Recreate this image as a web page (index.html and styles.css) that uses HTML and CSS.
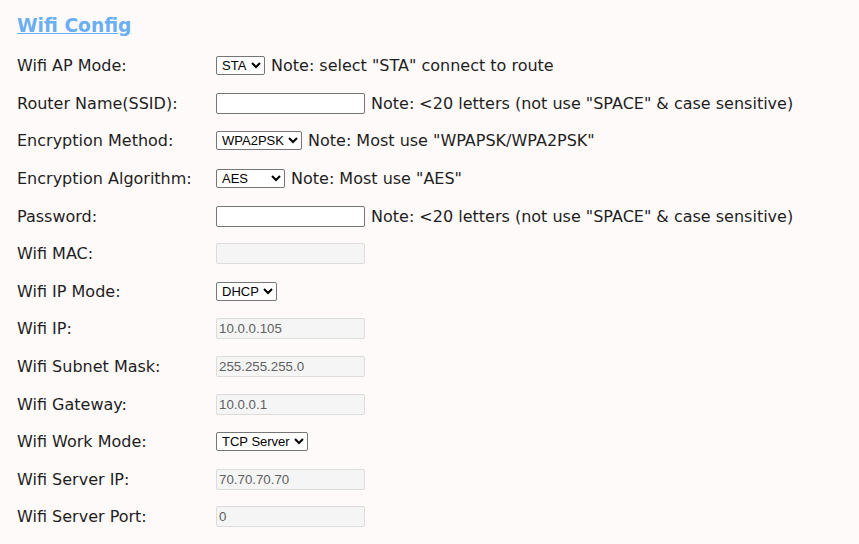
FILE: index.html
```html
<!DOCTYPE html>
<html lang="en">
<head>
  <meta charset="utf-8">
  <title>Wifi Config</title>
  <link rel="stylesheet" href="styles.css">
</head>
<body>
  <h2 class="title"><a href="#">Wifi Config</a></h2>
  <div class="form">
    <div class="row">
      <span class="label">Wifi AP Mode:</span>
      <span class="field">
        <select class="select"><option>STA</option><option>AP</option></select>
        Note: select "STA" connect to route
      </span>
    </div>
    <div class="row">
      <span class="label">Router Name(SSID):</span>
      <span class="field">
        <input class="text" type="text" value="">
        Note: &lt;20 letters (not use "SPACE" &amp; case sensitive)
      </span>
    </div>
    <div class="row">
      <span class="label">Encryption Method:</span>
      <span class="field">
        <select class="select"><option>WPA2PSK</option><option>WPAPSK</option></select>
        Note: Most use "WPAPSK/WPA2PSK"
      </span>
    </div>
    <div class="row">
      <span class="label">Encryption Algorithm:</span>
      <span class="field">
        <select class="select select-wide"><option>AES</option><option>TKIP</option></select>
        Note: Most use "AES"
      </span>
    </div>
    <div class="row">
      <span class="label">Password:</span>
      <span class="field">
        <input class="text" type="text" value="">
        Note: &lt;20 letters (not use "SPACE" &amp; case sensitive)
      </span>
    </div>
    <div class="row">
      <span class="label">Wifi MAC:</span>
      <span class="field"><input class="text" type="text" value="" disabled></span>
    </div>
    <div class="row">
      <span class="label">Wifi IP Mode:</span>
      <span class="field">
        <select class="select"><option>DHCP</option><option>Static</option></select>
      </span>
    </div>
    <div class="row">
      <span class="label">Wifi IP:</span>
      <span class="field"><input class="text" type="text" value="10.0.0.105" disabled></span>
    </div>
    <div class="row">
      <span class="label">Wifi Subnet Mask:</span>
      <span class="field"><input class="text" type="text" value="255.255.255.0" disabled></span>
    </div>
    <div class="row">
      <span class="label">Wifi Gateway:</span>
      <span class="field"><input class="text" type="text" value="10.0.0.1" disabled></span>
    </div>
    <div class="row">
      <span class="label">Wifi Work Mode:</span>
      <span class="field">
        <select class="select"><option>TCP Server</option><option>TCP Client</option></select>
      </span>
    </div>
    <div class="row">
      <span class="label">Wifi Server IP:</span>
      <span class="field"><input class="text" type="text" value="70.70.70.70" disabled></span>
    </div>
    <div class="row">
      <span class="label">Wifi Server Port:</span>
      <span class="field"><input class="text" type="text" value="0" disabled></span>
    </div>
  </div>
</body>
</html>
```

FILE: styles.css
```css
* {
  box-sizing: border-box;
}

body {
  margin: 0;
  padding: 11px 17px;
  background-color: #FFFAFA;
  color: #1E1E1E;
  font-family: "DejaVu Sans", Verdana, sans-serif;
  font-size: 16px;
}

.title {
  margin: 2px 0 8px;
  font-size: 18.7px;
  line-height: 26px;
}

.title a {
  color: #6AAFF2;
  text-decoration: underline;
}

.row {
  display: flex;
  align-items: center;
  height: 37.6px;
}

.label {
  width: 199px;
  flex-shrink: 0;
}

.field {
  display: flex;
  align-items: center;
  gap: 6px;
  white-space: nowrap;
}

.select {
  height: 19px;
  padding: 0 1px;
  border: 1px solid #767676;
  border-radius: 2px;
  background-color: #FFFFFF;
  color: #000000;
  font-family: "Liberation Sans", Arial, sans-serif;
  font-size: 13px;
}

.select-wide {
  width: 69px;
}

.text {
  width: 149px;
  height: 21px;
  padding: 1px 2px;
  border: 1px solid #767676;
  border-radius: 2px;
  background-color: #FFFFFF;
  font-family: "Liberation Sans", Arial, sans-serif;
  font-size: 13.3px;
}

.text:disabled {
  border-color: #DCDCDC;
  background-color: #F5F5F5;
  color: #5F5F5F;
}
```
